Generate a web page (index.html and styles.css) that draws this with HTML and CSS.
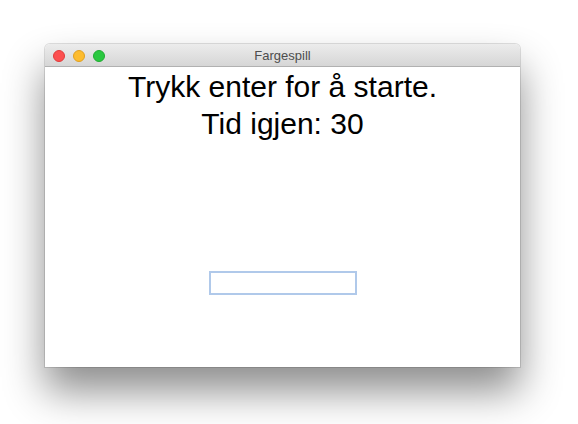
FILE: index.html
```html
<!DOCTYPE html>
<html>
<head>
<meta charset="utf-8">
<link rel="stylesheet" href="styles.css">
</head>
<body>
<div class="window">
  <div class="titlebar">
    <div class="lights">
      <span class="light red"></span>
      <span class="light yellow"></span>
      <span class="light green"></span>
    </div>
    <div class="title">Fargespill</div>
  </div>
  <div class="content">
    <div class="line">Trykk enter for å starte.</div>
    <div class="line">Tid igjen: 30</div>
    <input class="field" type="text">
  </div>
</div>
</body>
</html>
```
FILE: styles.css
```css
html, body {
  margin: 0;
  padding: 0;
  background: #ffffff;
  width: 578px;
  height: 424px;
  overflow: hidden;
}
body {
  padding-top: 44px;
  box-sizing: border-box;
  font-family: "Liberation Sans", Arial, sans-serif;
}
.window {
  margin-left: 45px;
  width: 475px;
  border-radius: 5px 5px 0 0;
  box-shadow: 0 0 0 1px rgba(0,0,0,0.12), 0 24px 40px rgba(0,0,0,0.45);
  background: #fff;
}
.titlebar {
  position: relative;
  height: 23px;
  box-sizing: border-box;
  border-radius: 5px 5px 0 0;
  background: linear-gradient(#ececec, #d6d6d6);
  border-bottom: 1px solid #b1b1b1;
  display: flex;
  align-items: center;
  justify-content: center;
}
.lights {
  position: absolute;
  left: 8px;
  top: 6px;
  display: flex;
  gap: 8px;
}
.light {
  width: 12px;
  height: 12px;
  border-radius: 50%;
  box-sizing: border-box;
}
.red { background: #fc4f4f; border: 1px solid #e03b3b; }
.yellow { background: #fdbc2e; border: 1px solid #e0a020; }
.green { background: #2ac840; border: 1px solid #20ab32; }
.title {
  font-size: 13px;
  color: #4d4d4d;
  padding-top: 1px;
}
.content {
  height: 300px;
  padding-top: 1px;
  box-sizing: border-box;
  text-align: center;
  display: flex;
  flex-direction: column;
  align-items: center;
}
.line {
  font-size: 30px;
  line-height: 37px;
  color: #000;
}
.field {
  margin-top: 129px;
  width: 148px;
  height: 24px;
  box-sizing: border-box;
  border: 2px solid #b0c9ea;
  outline: none;
  padding: 0;
  background: #fff;
}
```
